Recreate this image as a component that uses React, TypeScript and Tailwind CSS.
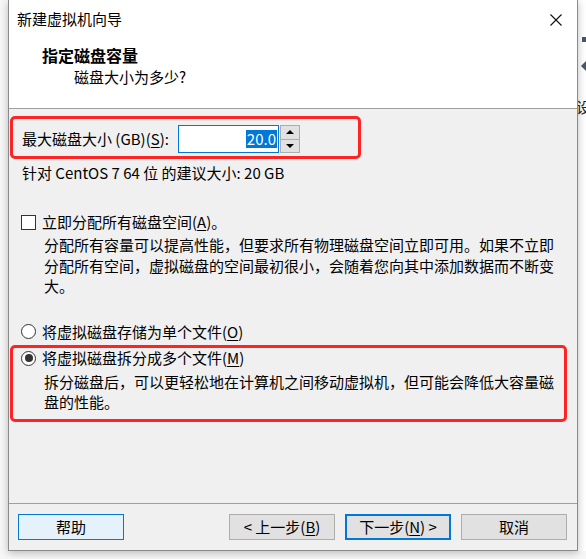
import React from "react";

const U = ({ children }: { children: React.ReactNode }) => (
  <span className="underline underline-offset-[2px] decoration-1">{children}</span>
);

function Radio({ checked }: { checked?: boolean }) {
  return (
    <div className="w-[15px] h-[15px] rounded-full border border-[#333] bg-white flex items-center justify-center shrink-0">
      {checked && <div className="w-[8px] h-[8px] rounded-full bg-[#333]" />}
    </div>
  );
}

function Btn({
  children,
  variant = "normal",
  className = "",
}: {
  children: React.ReactNode;
  variant?: "normal" | "hover" | "default";
  className?: string;
}) {
  const styles = {
    normal: "border border-[#adadad] bg-[#e1e1e1]",
    hover: "border border-[#0078d7] bg-[#e5f1fb]",
    default: "border-2 border-[#0078d7] bg-[#e1e1e1]",
  }[variant];
  return (
    <div
      className={`w-[106px] h-[26px] flex items-center justify-center text-[15px] text-black ${styles} ${className}`}
    >
      {children}
    </div>
  );
}

export default function App() {
  return (
    <div className="relative w-[586px] h-[559px] overflow-hidden bg-[#f7f7f7] font-['Noto_Sans_CJK_SC','Noto_Sans',sans-serif] text-black">
      {/* background desktop bits to the right of the dialog */}
      <div className="absolute top-0 right-0 w-[9px] h-[551px] bg-white" />
      <div className="absolute left-[582px] top-[37px] w-[5px] h-[5px] bg-[#46566a]" />
      <div className="absolute left-[581px] top-[61px] w-0 h-0 border-y-[5px] border-y-transparent border-r-[5px] border-r-[#4a5868]" />
      <div className="absolute left-[576px] top-[98px] w-[10px] overflow-hidden text-[15px] leading-[18px] text-[#222]">
        设
      </div>

      {/* dialog window */}
      <div className="relative ml-[8px] w-[570px] h-[551px] flex flex-col border-x border-b border-[#8a8a8a] bg-[#f0f0f0] shadow-[0_2px_8px_rgba(0,0,0,0.25)]">
        {/* title + header */}
        <div className="h-[109px] bg-white border-b border-[#a0a0a0] flex flex-col">
          <div className="h-[38px] flex items-center justify-between pl-[8px] pr-[15px]">
            <span className="text-[15px] leading-[20px]">新建虚拟机向导</span>
            <svg width="12" height="12" viewBox="0 0 12 12" className="mt-[1px]">
              <path d="M0.5 0.5 L11.5 11.5 M11.5 0.5 L0.5 11.5" stroke="#111" strokeWidth="1.1" />
            </svg>
          </div>
          <div className="mt-[7px] ml-[33px] h-[20px] leading-[20px] text-[16px] font-bold">
            指定磁盘容量
          </div>
          <div className="mt-[2px] ml-[65px] h-[20px] leading-[20px] text-[15px]">
            磁盘大小为多少?
          </div>
        </div>

        {/* body */}
        <div className="flex-1 flex flex-col text-[15px]">
          <div className="mt-[7px] ml-[1px] w-[351px] h-[43px] border-[3px] border-[#ff2424] rounded-[5px] flex items-center pl-[9px] pt-[3px]">
            <span className="w-[156px] leading-[20px] whitespace-nowrap">
              最大磁盘大小 (GB)(<U>S</U>):
            </span>
            <div className="w-[101px] h-[28px] border border-[#0078d7] bg-white flex items-center justify-end pr-[1px]">
              <span className="bg-[#0078d7] text-white leading-[18px] px-[1px]">20.0</span>
            </div>
            <div className="w-[20px] h-[28px] ml-[1px] flex flex-col border border-[#adadad] bg-[#e1e1e1]">
              <div className="flex-1 flex items-center justify-center border-b border-[#adadad]">
                <div className="w-0 h-0 border-x-[4px] border-x-transparent border-b-[4px] border-b-black" />
              </div>
              <div className="flex-1 flex items-center justify-center">
                <div className="w-0 h-0 border-x-[4px] border-x-transparent border-t-[4px] border-t-black" />
              </div>
            </div>
          </div>

          <div className="mt-[4px] ml-[13px] h-[20px] leading-[20px] whitespace-nowrap">
            针对 CentOS 7 64 位 的建议大小: 20 GB
          </div>

          <div className="mt-[29px] ml-[12px] h-[20px] flex items-center">
            <div className="w-[15px] h-[15px] border border-[#333] bg-white shrink-0" />
            <span className="ml-[6px] leading-[20px] whitespace-nowrap">
              立即分配所有磁盘空间(<U>A</U>)。
            </span>
          </div>
          <div className="mt-[3px] ml-[35px] leading-[20.5px] whitespace-nowrap">
            <div>分配所有容量可以提高性能，但要求所有物理磁盘空间立即可用。如果不立即</div>
            <div>分配所有空间，虚拟磁盘的空间最初很小，会随着您向其中添加数据而不断变</div>
            <div>大。</div>
          </div>

          <div className="mt-[25px] ml-[12px] h-[20px] flex items-center">
            <Radio />
            <span className="ml-[6px] leading-[20px] whitespace-nowrap">
              将虚拟磁盘存储为单个文件(<U>O</U>)
            </span>
          </div>

          <div className="mt-[3px] ml-[1px] w-[557px] h-[77px] border-[3px] border-[#ff2424] rounded-[5px] pl-[8px] pt-[1px] flex flex-col">
            <div className="h-[19px] flex items-center">
              <Radio checked />
              <span className="ml-[6px] leading-[20px] whitespace-nowrap">
                将虚拟磁盘拆分成多个文件(<U>M</U>)
              </span>
            </div>
            <div className="mt-[4px] ml-[23px] leading-[20.5px] whitespace-nowrap">
              <div>拆分磁盘后，可以更轻松地在计算机之间移动虚拟机，但可能会降低大容量磁</div>
              <div>盘的性能。</div>
            </div>
          </div>
        </div>

        {/* footer */}
        <div className="h-[47px] border-t border-[#a0a0a0] flex items-center pl-[9px] pr-[10px]">
          <Btn variant="hover">帮助</Btn>
          <div className="flex-1" />
          <Btn>&lt; 上一步(<U>B</U>)</Btn>
          <Btn variant="default" className="ml-[10px]">
            下一步(<U>N</U>) &gt;
          </Btn>
          <Btn className="ml-[10px]">取消</Btn>
        </div>
      </div>
    </div>
  );
}
